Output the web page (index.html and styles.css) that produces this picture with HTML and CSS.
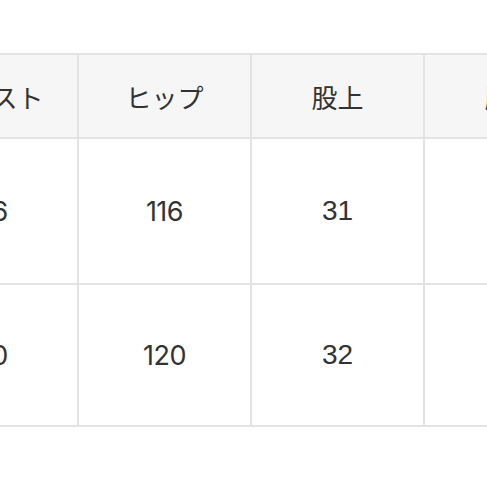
FILE: index.html
```html
<!DOCTYPE html>
<html lang="ja">
<head>
<meta charset="utf-8">
<link rel="stylesheet" href="styles.css">
</head>
<body>
<div class="page">
  <div class="size-table">
    <div class="cell head">ウエスト</div>
    <div class="cell head">ヒップ</div>
    <div class="cell head">股上</div>
    <div class="cell head">股下</div>
    <div class="cell row1 num-a">86</div>
    <div class="cell row1 num-a">116</div>
    <div class="cell row1 num-b">31</div>
    <div class="cell row1 num-b">72</div>
    <div class="cell row2 num-a">90</div>
    <div class="cell row2 num-a">120</div>
    <div class="cell row2 num-b">32</div>
    <div class="cell row2 num-b">73</div>
  </div>
</div>
</body>
</html>
```

FILE: styles.css
```css
html, body {
  margin: 0;
  padding: 0;
  background: #ffffff;
  overflow: hidden;
}
.page {
  width: 487px;
  height: 487px;
  overflow: hidden;
  padding-top: 53px;
  box-sizing: border-box;
}
.size-table {
  display: grid;
  grid-template-columns: repeat(4, 171px);
  grid-template-rows: 82px 144px 140px;
  gap: 2px;
  padding: 2px;
  background: #e3e3e3;
  width: max-content;
  margin-left: -96px;
}
.cell {
  background: #ffffff;
  display: flex;
  align-items: center;
  justify-content: center;
  color: #333333;
  font-family: "Noto Sans CJK JP", "Noto Sans", sans-serif;
  font-size: 26px;
}
.cell.head {
  background: #f6f6f6;
  font-weight: 400;
}
.num-a {
  font-family: "Inter", "Noto Sans", sans-serif;
  font-size: 27px;
  letter-spacing: -0.5px;
}
.num-b {
  font-family: "Liberation Sans", Arial, sans-serif;
  font-size: 28px;
}
```
